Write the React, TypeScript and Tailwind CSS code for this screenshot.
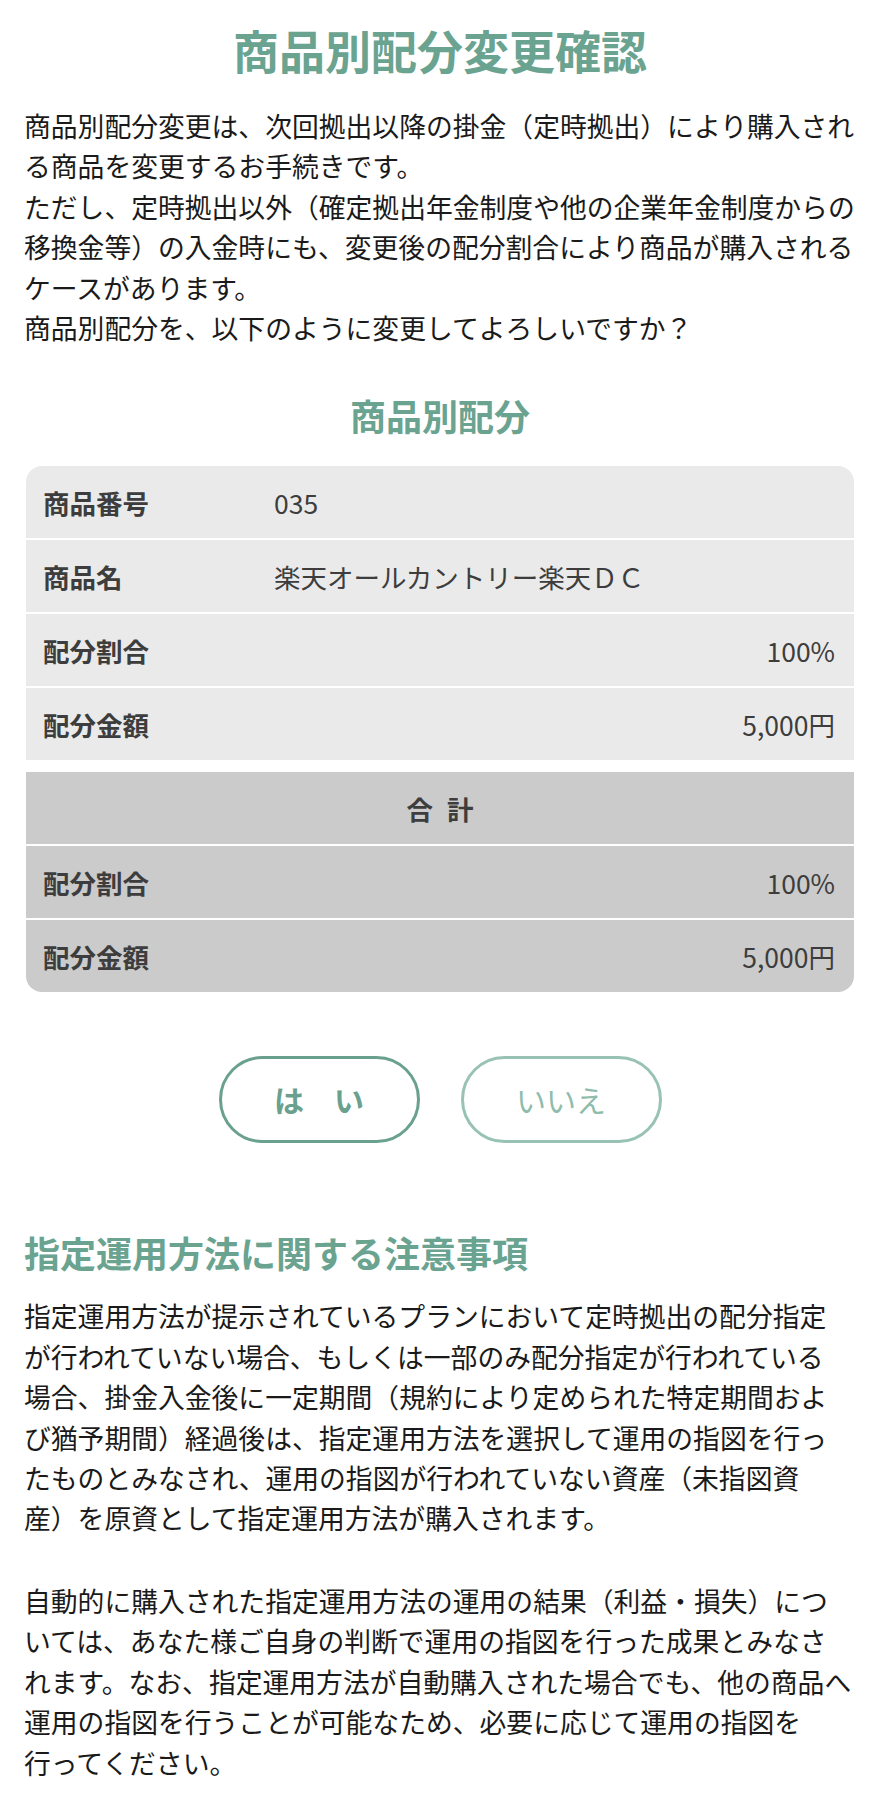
import React from "react";

const items = [
  { label: "商品番号", value: "035", right: false },
  { label: "商品名", value: "楽天オールカントリー楽天ＤＣ", right: false },
  { label: "配分割合", value: "100%", right: true },
  { label: "配分金額", value: "5,000円", right: true },
];

const totals = [
  { label: "配分割合", value: "100%" },
  { label: "配分金額", value: "5,000円" },
];

function Row({ label, value, right, bg, extra = "" }: { label: string; value: string; right: boolean; bg: string; extra?: string }) {
  return (
    <div className={`flex h-[72px] items-center pl-[17px] pr-[19px] text-[26.5px] text-[#3d3d3d] ${bg} ${extra}`}>
      <div className="w-[231px] shrink-0 font-bold">{label}</div>
      <div className={`flex-1 ${right ? "text-right" : ""}`}>{value}</div>
    </div>
  );
}

export default function App() {
  return (
    <div
      className="min-h-screen bg-white px-6 pt-[15px] pb-4"
      style={{ fontFamily: '"Noto Sans CJK JP", "Noto Sans", sans-serif' }}
    >
      <h1 className="text-center text-[46px] font-bold leading-[69px] text-[#6aa390]">商品別配分変更確認</h1>

      <p className="mt-[22px] text-[26.8px] leading-[40.4px] text-[#1a1a1a] whitespace-nowrap">
        商品別配分変更は、次回拠出以降の掛金（定時拠出）により購入され
        <br />
        る商品を変更するお手続きです。
        <br />
        ただし、定時拠出以外（確定拠出年金制度や他の企業年金制度からの
        <br />
        移換金等）の入金時にも、変更後の配分割合により商品が購入される
        <br />
        ケースがあります。
        <br />
        商品別配分を、以下のように変更してよろしいですか？
      </p>

      <h2 className="mt-[40px] text-center text-[36px] font-bold leading-[54px] text-[#6aa390]">商品別配分</h2>

      <div className="mx-[2px] mt-[24px]">
        <div className="flex flex-col gap-[2px]">
          {items.map((it, i) => (
            <Row key={it.label} {...it} bg="bg-[#eaeaea]" extra={i === 0 ? "rounded-t-[16px]" : ""} />
          ))}
        </div>
        <div className="mt-[12px] flex flex-col gap-[2px]">
          <div className="flex h-[72px] items-center justify-center gap-[14px] bg-[#cbcbcb] text-[26.5px] font-bold text-[#3d3d3d]">
            <span>合</span>
            <span>計</span>
          </div>
          {totals.map((it, i) => (
            <Row
              key={it.label}
              label={it.label}
              value={it.value}
              right
              bg="bg-[#cbcbcb]"
              extra={i === totals.length - 1 ? "rounded-b-[16px]" : ""}
            />
          ))}
        </div>
      </div>

      <div className="mt-[64px] flex justify-center gap-[41px]">
        <button className="flex h-[87px] w-[201px] items-center justify-center rounded-full border-[3px] border-[#6aa08e] text-[30px] font-bold text-[#6aa08e]">
          は　い
        </button>
        <button className="flex h-[87px] w-[201px] items-center justify-center rounded-full border-[3px] border-[#97c2b4] text-[30px] text-[#8fbcad]">
          いいえ
        </button>
      </div>

      <h2 className="mt-[82px] text-[36px] font-bold leading-[54px] text-[#6aa390]">指定運用方法に関する注意事項</h2>

      <p className="mt-[17px] text-[26.8px] leading-[40.4px] text-[#1a1a1a] whitespace-nowrap">
        指定運用方法が提示されているプランにおいて定時拠出の配分指定
        <br />
        が行われていない場合、もしくは一部のみ配分指定が行われている
        <br />
        場合、掛金入金後に一定期間（規約により定められた特定期間およ
        <br />
        び猶予期間）経過後は、指定運用方法を選択して運用の指図を行っ
        <br />
        たものとみなされ、運用の指図が行われていない資産（未指図資
        <br />
        産）を原資として指定運用方法が購入されます。
      </p>

      <p className="mt-[42px] text-[26.8px] leading-[40.4px] text-[#1a1a1a] whitespace-nowrap">
        自動的に購入された指定運用方法の運用の結果（利益・損失）につ
        <br />
        いては、あなた様ご自身の判断で運用の指図を行った成果とみなさ
        <br />
        れます。なお、指定運用方法が自動購入された場合でも、他の商品へ
        <br />
        運用の指図を行うことが可能なため、必要に応じて運用の指図を
        <br />
        行ってください。
      </p>
    </div>
  );
}
